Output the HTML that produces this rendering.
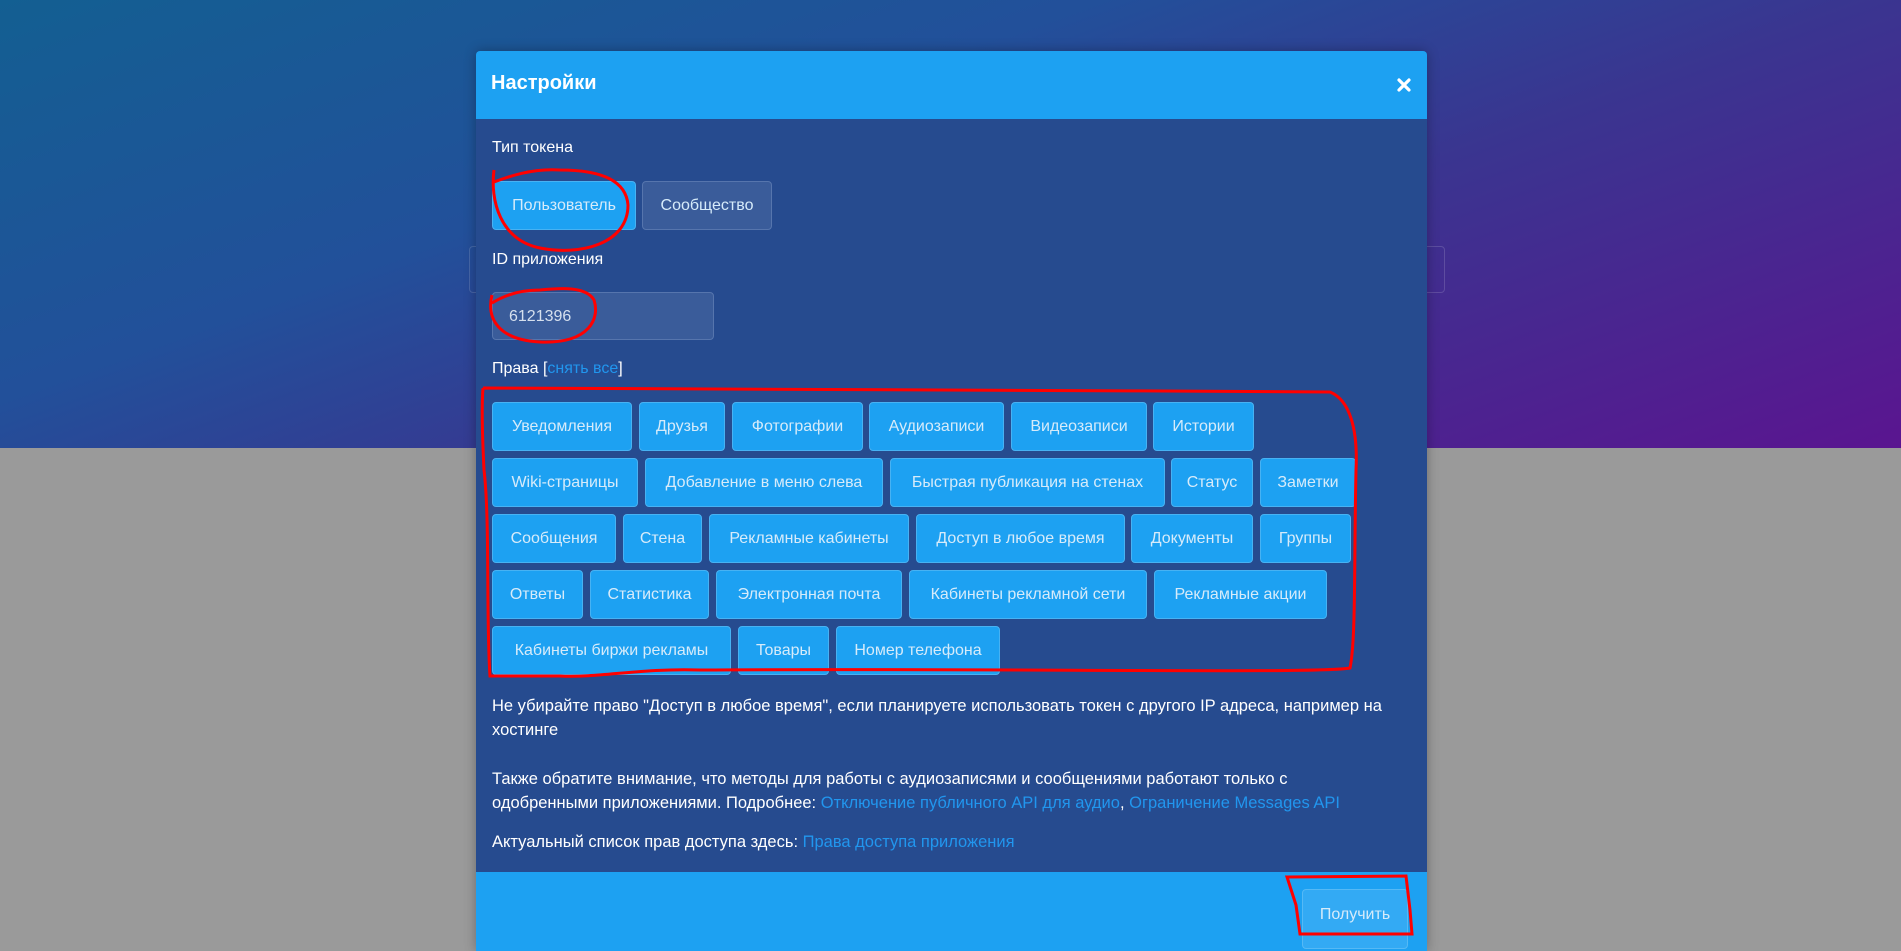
<!DOCTYPE html>
<html><head><meta charset="utf-8"><style>
*{margin:0;padding:0;box-sizing:border-box}
body{width:1901px;height:937px;overflow:hidden;position:relative;background:#9a9a9a;font-family:"Liberation Sans","Noto Sans CJK SC",sans-serif}
.top{position:absolute;left:0;top:0;width:1901px;height:448px;background:linear-gradient(160deg,#135f92 0%,#22509a 35%,#3a3590 60%,#5a1590 100%)}
.ghost{position:absolute;left:469px;top:246px;width:976px;height:47px;border:1px solid rgba(255,255,255,.15);border-radius:4px}
.modal{position:absolute;left:476px;top:51px;width:951px;height:900px;background:#264b8f;border-radius:4px 4px 0 0;overflow:hidden;box-shadow:0 0 12px rgba(0,0,0,.3)}
.hdr{position:absolute;left:0;top:0;width:951px;height:68px;background:#1da1f2}
.hdr h1{position:absolute;left:15px;top:21px;font-size:20px;font-weight:bold;color:#fff}
.x{position:absolute;left:921px;top:27px}
.ftr{position:absolute;left:0;top:821px;width:951px;height:100px;background:#1da1f2}
.lbl{position:absolute;left:16px;color:#fff;font-size:16px;white-space:nowrap}
.btn{position:absolute;height:49px;background:#1da1f2;border:1px solid #47b2f3;border-radius:4px;color:#d6ebfa;font-size:16px;line-height:47px;text-align:center;white-space:nowrap}
.txt{position:absolute;left:16px;color:#fff;font-size:16.5px;white-space:nowrap}
a{color:#2196ee;text-decoration:none}
</style></head><body>
<div class="top"></div>
<div class="ghost"></div>
<div class="modal">
 <div class="hdr"><h1>Настройки</h1><svg class="x" width="14" height="14" viewBox="0 0 14 14"><path d="M2,2 L12,12 M12,2 L2,12" stroke="#fff" stroke-width="3.2" stroke-linecap="round"/></svg></div>
 <div class="lbl" style="top:88px">Тип токена</div>
 <div class="btn" style="left:16px;top:130px;width:144px">Пользователь</div>
 <div class="btn" style="left:166px;top:130px;width:130px;background:#3a5c9a;border-color:#5675ad">Сообщество</div>
 <div class="lbl" style="top:200px">ID приложения</div>
 <div class="btn" style="left:16px;top:241px;width:222px;height:48px;background:#3a5c9a;border-color:#5675ad;text-align:left;padding-left:16px;color:#d6e0ee">6121396</div>
 <div class="lbl" style="top:309px">Права [<a>снять все</a>]</div>

 <div class="btn" style="left:16px;top:351px;width:140px">Уведомления</div>
 <div class="btn" style="left:163px;top:351px;width:86px">Друзья</div>
 <div class="btn" style="left:256px;top:351px;width:131px">Фотографии</div>
 <div class="btn" style="left:393px;top:351px;width:135px">Аудиозаписи</div>
 <div class="btn" style="left:535px;top:351px;width:136px">Видеозаписи</div>
 <div class="btn" style="left:677px;top:351px;width:101px">Истории</div>

 <div class="btn" style="left:16px;top:407px;width:146px">Wiki-страницы</div>
 <div class="btn" style="left:169px;top:407px;width:238px">Добавление в меню слева</div>
 <div class="btn" style="left:414px;top:407px;width:275px">Быстрая публикация на стенах</div>
 <div class="btn" style="left:695px;top:407px;width:82px">Статус</div>
 <div class="btn" style="left:784px;top:407px;width:96px">Заметки</div>

 <div class="btn" style="left:16px;top:463px;width:124px">Сообщения</div>
 <div class="btn" style="left:147px;top:463px;width:79px">Стена</div>
 <div class="btn" style="left:233px;top:463px;width:200px">Рекламные кабинеты</div>
 <div class="btn" style="left:440px;top:463px;width:209px">Доступ в любое время</div>
 <div class="btn" style="left:655px;top:463px;width:122px">Документы</div>
 <div class="btn" style="left:784px;top:463px;width:91px">Группы</div>

 <div class="btn" style="left:16px;top:519px;width:91px">Ответы</div>
 <div class="btn" style="left:114px;top:519px;width:119px">Статистика</div>
 <div class="btn" style="left:240px;top:519px;width:186px">Электронная почта</div>
 <div class="btn" style="left:433px;top:519px;width:238px">Кабинеты рекламной сети</div>
 <div class="btn" style="left:678px;top:519px;width:173px">Рекламные акции</div>

 <div class="btn" style="left:16px;top:575px;width:239px">Кабинеты биржи рекламы</div>
 <div class="btn" style="left:262px;top:575px;width:91px">Товары</div>
 <div class="btn" style="left:360px;top:575px;width:164px">Номер телефона</div>

 <div class="txt" style="top:646px">Не убирайте право "Доступ в любое время", если планируете использовать токен с другого IP адреса, например на</div>
 <div class="txt" style="top:670px">хостинге</div>
 <div class="txt" style="top:719px">Также обратите внимание, что методы для работы с аудиозаписями и сообщениями работают только с</div>
 <div class="txt" style="top:743px">одобренными приложениями. Подробнее: <a>Отключение публичного API для аудио</a>, <a>Ограничение Messages API</a></div>
 <div class="txt" style="top:782px">Актуальный список прав доступа здесь: <a>Права доступа приложения</a></div>
 <div class="ftr"></div>
 <div class="btn" style="left:826px;top:838px;width:106px;background:#33aaf4;border-color:#55b9f5;height:60px;line-height:50px">Получить</div>
</div>
<svg style="position:absolute;left:0;top:0" width="1901" height="937" fill="none" stroke="#f00" stroke-width="3">
 <path d="M494,170 C490,200 500,240 540,248 C580,256 628,244 628,205 C626,180 600,170 560,170 C530,168 505,178 494,182"/>
 <path d="M492,295 C486,320 500,340 540,342 C590,344 600,318 594,300 C586,286 560,288 540,290 C515,290 500,298 492,303"/>
 <path d="M483,388 C600,388 1000,390 1330,392 C1350,400 1358,430 1356,470 C1354,560 1356,640 1350,668 C1320,674 1000,668 700,670 C640,668 600,678 560,676 C520,676 496,676 490,676 C486,620 490,520 484,470 C482,430 482,400 483,388"/>
 <path d="M1287,877 L1406,876 L1410,910 L1412,934 L1300,934 L1296,905 Z"/>
</svg>
</body></html>
